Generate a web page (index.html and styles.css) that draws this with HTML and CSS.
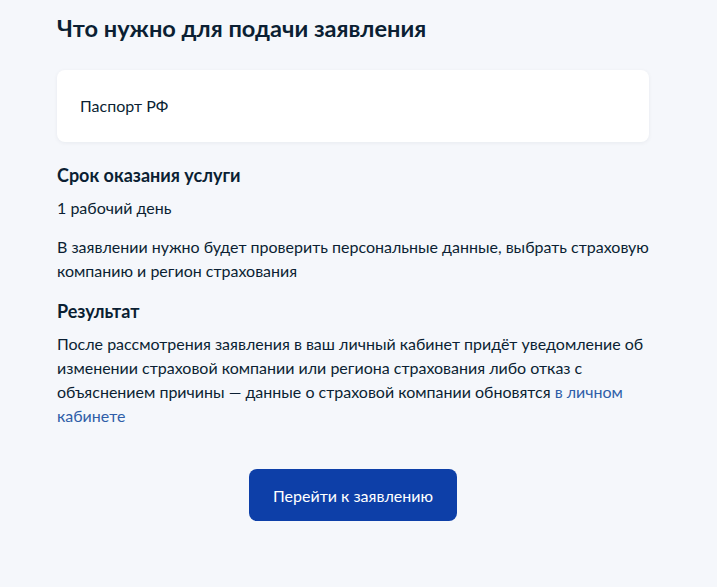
FILE: index.html
```html
<!DOCTYPE html>
<html lang="ru">
<head>
    <meta charset="UTF-8">
    <meta name="viewport" content="width=device-width, initial-scale=1.0">
    <title>Что нужно для подачи заявления</title>
    <link rel="stylesheet" href="styles.css">
</head>
<body>
    <main class="page">
        <h1 class="page-title">Что нужно для подачи заявления</h1>

        <div class="card">
            <p>Паспорт РФ</p>
        </div>

        <h2 class="section-title">Срок оказания услуги</h2>
        <p class="text small-gap">1 рабочий день</p>
        <p class="text">В заявлении нужно будет проверить персональные данные, выбрать страховую компанию и регион страхования</p>

        <h2 class="section-title result">Результат</h2>
        <p class="text small-gap">После рассмотрения заявления в ваш личный кабинет придёт уведомление об изменении страховой компании или региона страхования либо отказ с объяснением причины — данные о страховой компании обновятся <a href="#" class="link">в личном кабинете</a></p>

        <div class="actions">
            <button class="btn primary">Перейти к заявлению</button>
        </div>
    </main>
</body>
</html>
```

FILE: styles.css
```css
body {
    margin: 0;
    padding: 0;
    background: #f5f7fb;
    font-family: Lato, "Noto Sans", sans-serif;
    color: #0b1f33;
}
.page {
    width: 592px;
    padding: 12px 0 0 57px;
}
.page-title {
    margin: 0 0 26px;
    font-size: 23.6px;
    line-height: 32px;
    font-weight: 700;
}
.card {
    background: #fff;
    border-radius: 8px;
    padding: 24px 23px;
    box-shadow: 0 1px 4px rgba(11, 31, 51, .06);
}
.card p {
    margin: 0;
    font-size: 16px;
    line-height: 24px;
}
.section-title {
    margin: 21px 0 0;
    font-size: 18px;
    line-height: 24px;
    font-weight: 700;
}
.section-title.result {
    margin-top: 16px;
}
.text {
    margin: 15px 0 0;
    font-size: 16px;
    line-height: 24px;
}
.text.small-gap {
    margin-top: 9px;
}
.link {
    color: #2f5ea8;
    text-decoration: none;
}
.actions {
    display: flex;
    justify-content: center;
    margin-top: 41px;
}
.btn {
    border: none;
    border-radius: 8px;
    font-family: inherit;
    font-size: 16px;
    cursor: pointer;
}
.btn.primary {
    width: 208px;
    height: 52px;
    background: #0d3fa8;
    color: #fff;
}
```
